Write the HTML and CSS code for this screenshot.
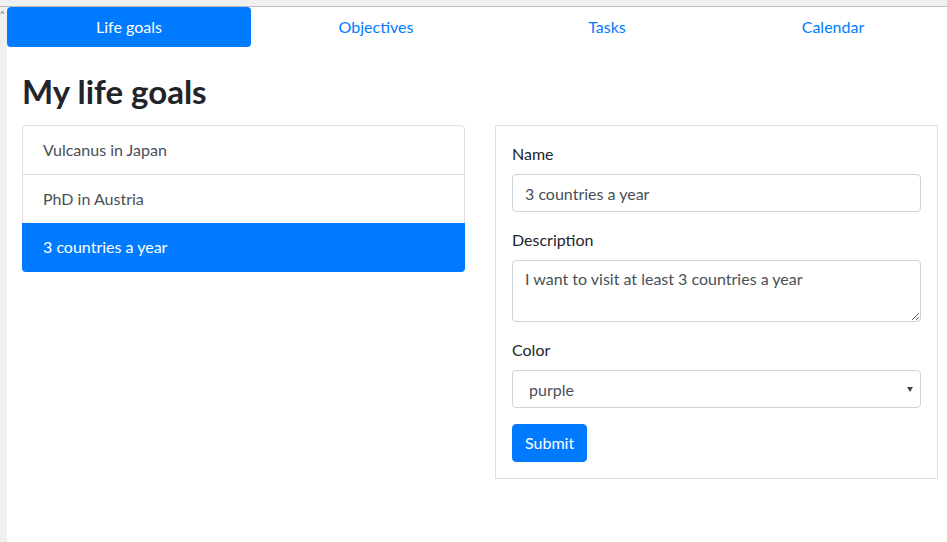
FILE: index.html
```
<!DOCTYPE html>
<html lang="en">
<head>
<meta charset="utf-8">
<title>My life goals</title>
<link rel="stylesheet" href="styles.css">
</head>
<body>
<div class="chrome-top"></div>
<div class="frame">
  <div class="chrome-left"><span class="caret">^</span></div>
  <main class="app">
    <nav class="nav">
      <a class="nav-link active w1" href="#">Life goals</a>
      <a class="nav-link w2" href="#">Objectives</a>
      <a class="nav-link w3" href="#">Tasks</a>
      <a class="nav-link w4" href="#">Calendar</a>
    </nav>
    <section class="content">
      <h2 class="title">My life goals</h2>
      <div class="row">
        <div class="list-group">
          <a class="list-item" href="#">Vulcanus in Japan</a>
          <a class="list-item" href="#">PhD in Austria</a>
          <a class="list-item active" href="#">3 countries a year</a>
        </div>
        <form class="card">
          <div class="form-group">
            <label class="label" for="name">Name</label>
            <input class="control" id="name" type="text" value="3 countries a year">
          </div>
          <div class="form-group">
            <label class="label" for="desc">Description</label>
            <textarea class="control area" id="desc" rows="2">I want to visit at least 3 countries a year</textarea>
          </div>
          <div class="form-group">
            <label class="label" for="color">Color</label>
            <div class="select-wrap">
              <select class="control select" id="color">
                <option>purple</option>
              </select>
              <svg class="arrow" width="6" height="5" viewBox="0 0 6 5"><path d="M0 0H6L3 5Z" fill="#444"/></svg>
            </div>
          </div>
          <button class="btn" type="button">Submit</button>
        </form>
      </div>
    </section>
  </main>
</div>
</body>
</html>
```
FILE: styles.css
```
html, body {
  margin: 0;
  padding: 0;
  background: #fff;
}
body {
  font-family: Lato, "Open Sans", "Liberation Sans", sans-serif;
  font-size: 16px;
  line-height: 24px;
  color: #212529;
  height: 542px;
  overflow: hidden;
  display: flex;
  flex-direction: column;
}
.chrome-top {
  height: 6px;
  background: #f0f0f0;
  border-bottom: 1px solid #bcbcbc;
  flex: none;
}
.frame {
  display: flex;
  flex: 1;
}
.chrome-left {
  width: 7px;
  background: #f0f0f0;
  flex: none;
  position: relative;
  overflow: hidden;
}
.caret {
  position: absolute;
  left: 0;
  top: 3px;
  font-size: 8px;
  line-height: 8px;
  color: #555;
}
.app {
  flex: 1;
  min-width: 0;
}
.nav {
  display: flex;
}
.nav-link {
  display: block;
  padding: 8px 0;
  text-align: center;
  color: #007bff;
  text-decoration: none;
  border-radius: 4px;
}
.w1 { flex: 0 0 244px; }
.w2 { flex: 0 0 250px; }
.w3 { flex: 0 0 212px; }
.w4 { flex: 0 0 240px; }
.nav-link.active {
  background: #007bff;
  color: #fff;
}
.content {
  padding: 26px 10px 0 15px;
}
.title {
  margin: 0 0 15px;
  font-size: 33px;
  line-height: 37px;
  font-weight: 700;
  color: #212529;
}
.row {
  display: grid;
  grid-template-columns: 443px 443px;
  column-gap: 30px;
  align-items: start;
}
.list-group {
  display: flex;
  flex-direction: column;
  border: 1px solid rgba(0,0,0,.125);
  border-radius: 4px;
}
.list-item {
  display: block;
  padding: 12px 20px;
  color: #495057;
  text-decoration: none;
  border-top: 1px solid rgba(0,0,0,.125);
}
.list-item:first-child {
  border-top: none;
}
.list-item.active {
  background: #007bff;
  color: #fff;
  margin: 0 -1px -1px;
  padding: 12px 21px 13px;
  border-top: none;
  border-radius: 0 0 4px 4px;
}
.card {
  border: 1px solid rgba(0,0,0,.125);
  padding: 16px;
  margin: 0;
}
.form-group {
  margin-bottom: 16px;
}
.label {
  display: block;
  margin-bottom: 8px;
}
.control {
  display: block;
  box-sizing: border-box;
  width: 100%;
  height: 38px;
  padding: 6px 12px;
  font-family: inherit;
  font-size: 16px;
  line-height: 24px;
  color: #495057;
  background: #fff;
  border: 1px solid #ced4da;
  border-radius: 4px;
  margin: 0;
}
.area {
  height: 62px;
}
.select-wrap {
  position: relative;
}
.select {
  appearance: none;
  -webkit-appearance: none;
  padding: 7px 12px 5px 16px;
}
.arrow {
  position: absolute;
  right: 8px;
  top: 17px;
}
.btn {
  display: block;
  font-family: inherit;
  font-size: 16px;
  line-height: 24px;
  padding: 6px 12px;
  color: #fff;
  background: #007bff;
  border: 1px solid #007bff;
  border-radius: 4px;
  margin: 0;
}
```
